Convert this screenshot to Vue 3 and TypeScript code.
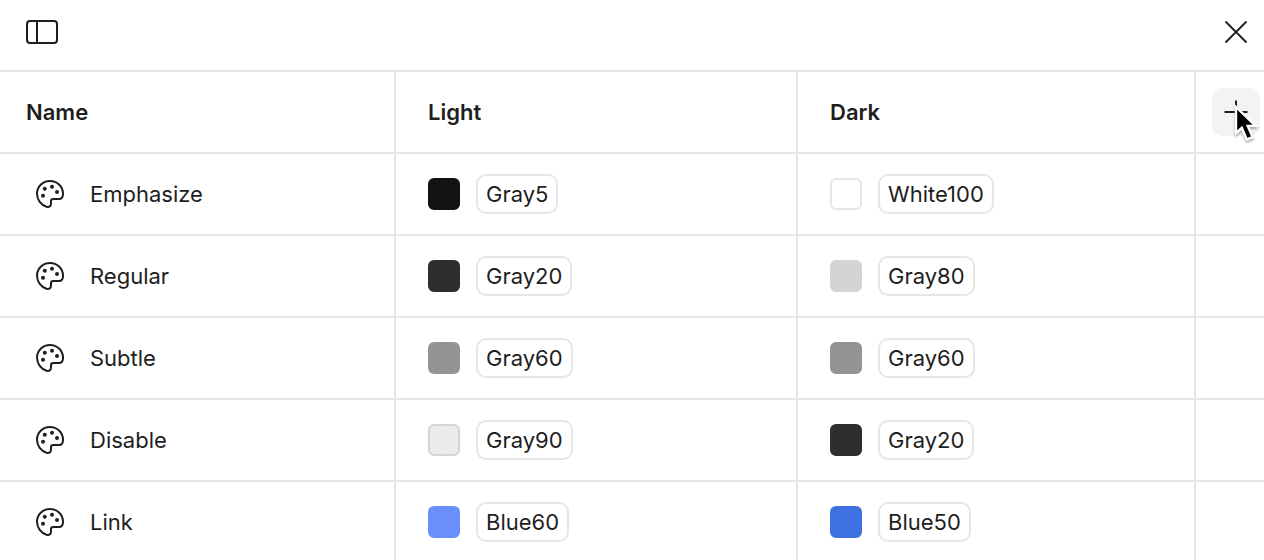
<script setup lang="ts">
interface Swatch {
  name: string
  color: string
  border?: string
}

interface Variable {
  name: string
  light: Swatch
  dark: Swatch
}

const gray20: Swatch = { name: 'Gray20', color: '#2e2e2e' }
const gray60: Swatch = { name: 'Gray60', color: '#949494' }

const variables: Variable[] = [
  {
    name: 'Emphasize',
    light: { name: 'Gray5', color: '#121212' },
    dark: { name: 'White100', color: '#ffffff', border: '#e6e6e6' },
  },
  { name: 'Regular', light: gray20, dark: { name: 'Gray80', color: '#d4d4d4' } },
  { name: 'Subtle', light: gray60, dark: gray60 },
  { name: 'Disable', light: { name: 'Gray90', color: '#ebebeb', border: '#d4d4d4' }, dark: gray20 },
  { name: 'Link', light: { name: 'Blue60', color: '#6990fa' }, dark: { name: 'Blue50', color: '#3f71e2' } },
]
</script>

<template>
  <main class="panel">
    <header class="toolbar">
      <button class="icon-button" type="button" aria-label="Toggle sidebar">
        <svg width="32" height="24" viewBox="0 0 32 24" fill="none" stroke="#1e1e1e" stroke-width="2">
          <rect x="1" y="1" width="30" height="22" rx="3" />
          <path d="M11 1V23" />
        </svg>
      </button>
      <button class="icon-button" type="button" aria-label="Close">
        <svg width="24" height="24" viewBox="0 0 24 24" fill="none" stroke="#1e1e1e" stroke-width="1.8">
          <path d="M1.5 1.5L22.5 22.5M22.5 1.5L1.5 22.5" />
        </svg>
      </button>
    </header>

    <table class="variables">
      <colgroup>
        <col class="col-name" />
        <col class="col-light" />
        <col />
        <col class="col-add" />
      </colgroup>
      <thead>
        <tr>
          <th scope="col">Name</th>
          <th scope="col">Light</th>
          <th scope="col">Dark</th>
          <th class="add-cell" scope="col">
            <button class="add-button" type="button" aria-label="Add mode">
              <svg width="24" height="24" viewBox="0 0 24 24" fill="none" stroke="#1e1e1e" stroke-width="2">
                <path d="M12 0.5V23.5M0.5 12H23.5" />
              </svg>
              <svg class="pointer" width="32" height="44" viewBox="0 0 32 44" aria-hidden="true">
                <path
                  d="M4 3V29.2L9.8 23.8L14.8 35.4L20.6 33L15.7 21.9H23.6Z"
                  fill="#000000"
                  stroke="#ffffff"
                  stroke-width="2.4"
                />
              </svg>
            </button>
          </th>
        </tr>
      </thead>
      <tbody>
        <tr v-for="variable in variables" :key="variable.name">
          <td>
            <div class="name">
              <svg class="palette" width="28" height="28" viewBox="0 0 28 28" fill="none">
                <path
                  d="M27 13.4C26.8 6.3 21 1 14 1C6.6 1 1 6.6 1 13.6C1 19.8 5 25 10.6 26.7C13.2 27.4 15 26.2 15 23.6V21.2C15 19.8 15.8 19 17.2 19H23C25.6 19 27.2 17 27 13.4Z"
                  stroke="#1e1e1e"
                  stroke-width="2"
                />
                <g fill="#1e1e1e">
                  <circle cx="8.8" cy="8.8" r="2" />
                  <circle cx="16" cy="6.8" r="2" />
                  <circle cx="21" cy="12" r="2" />
                  <circle cx="7" cy="15.8" r="2" />
                </g>
              </svg>
              <span>{{ variable.name }}</span>
            </div>
          </td>
          <td v-for="(swatch, index) in [variable.light, variable.dark]" :key="index">
            <div class="value">
              <span
                class="swatch"
                :style="{ background: swatch.color, borderColor: swatch.border ?? swatch.color }"
              ></span>
              <span class="chip">{{ swatch.name }}</span>
            </div>
          </td>
          <td></td>
        </tr>
      </tbody>
    </table>
  </main>
</template>

<style>
body {
  margin: 0;
  background: #ffffff;
}
</style>

<style scoped>
.panel {
  height: 100vh;
  overflow: hidden;
  background: #ffffff;
  color: #1e1e1e;
  font-family: Inter, "Liberation Sans", sans-serif;
  font-size: 22px;
  line-height: 32px;
}

.toolbar {
  display: flex;
  align-items: center;
  justify-content: space-between;
  padding: 20px 16px 26px 26px;
  border-bottom: 2px solid #e6e6e6;
}

button {
  margin: 0;
  padding: 0;
  border: 0;
  background: none;
}

svg {
  display: block;
}

.variables {
  width: 100%;
  table-layout: fixed;
  border-collapse: separate;
  border-spacing: 0;
}

.col-name {
  width: 396px;
}

.col-light {
  width: 402px;
}

.col-add {
  width: 68px;
}

th,
td {
  box-sizing: border-box;
  height: 82px;
  padding: 0 32px;
  border-right: 2px solid #e6e6e6;
  border-bottom: 2px solid #e6e6e6;
  text-align: left;
  vertical-align: middle;
}

th {
  font-weight: 600;
}

th:first-child {
  padding-left: 26px;
}

td:first-child {
  padding-left: 36px;
}

th:last-child,
td:last-child {
  padding: 0;
  border-right: 0;
}

th.add-cell {
  padding-left: 16px;
}

.add-button {
  position: relative;
  display: flex;
  align-items: center;
  justify-content: center;
  width: 48px;
  height: 48px;
  border-radius: 10px;
  background: #f3f3f3;
}

.pointer {
  position: absolute;
  top: 16px;
  left: 20px;
  filter: drop-shadow(0 2px 1px rgb(0 0 0 / 30%));
}

.name {
  display: flex;
  align-items: center;
  gap: 26px;
}

.value {
  display: flex;
  align-items: center;
  gap: 16px;
}

.swatch {
  box-sizing: border-box;
  width: 32px;
  height: 32px;
  border: 2px solid;
  border-radius: 6px;
}

.chip {
  box-sizing: border-box;
  height: 40px;
  padding: 2px 8px;
  border: 2px solid #e6e6e6;
  border-radius: 10px;
}
</style>
